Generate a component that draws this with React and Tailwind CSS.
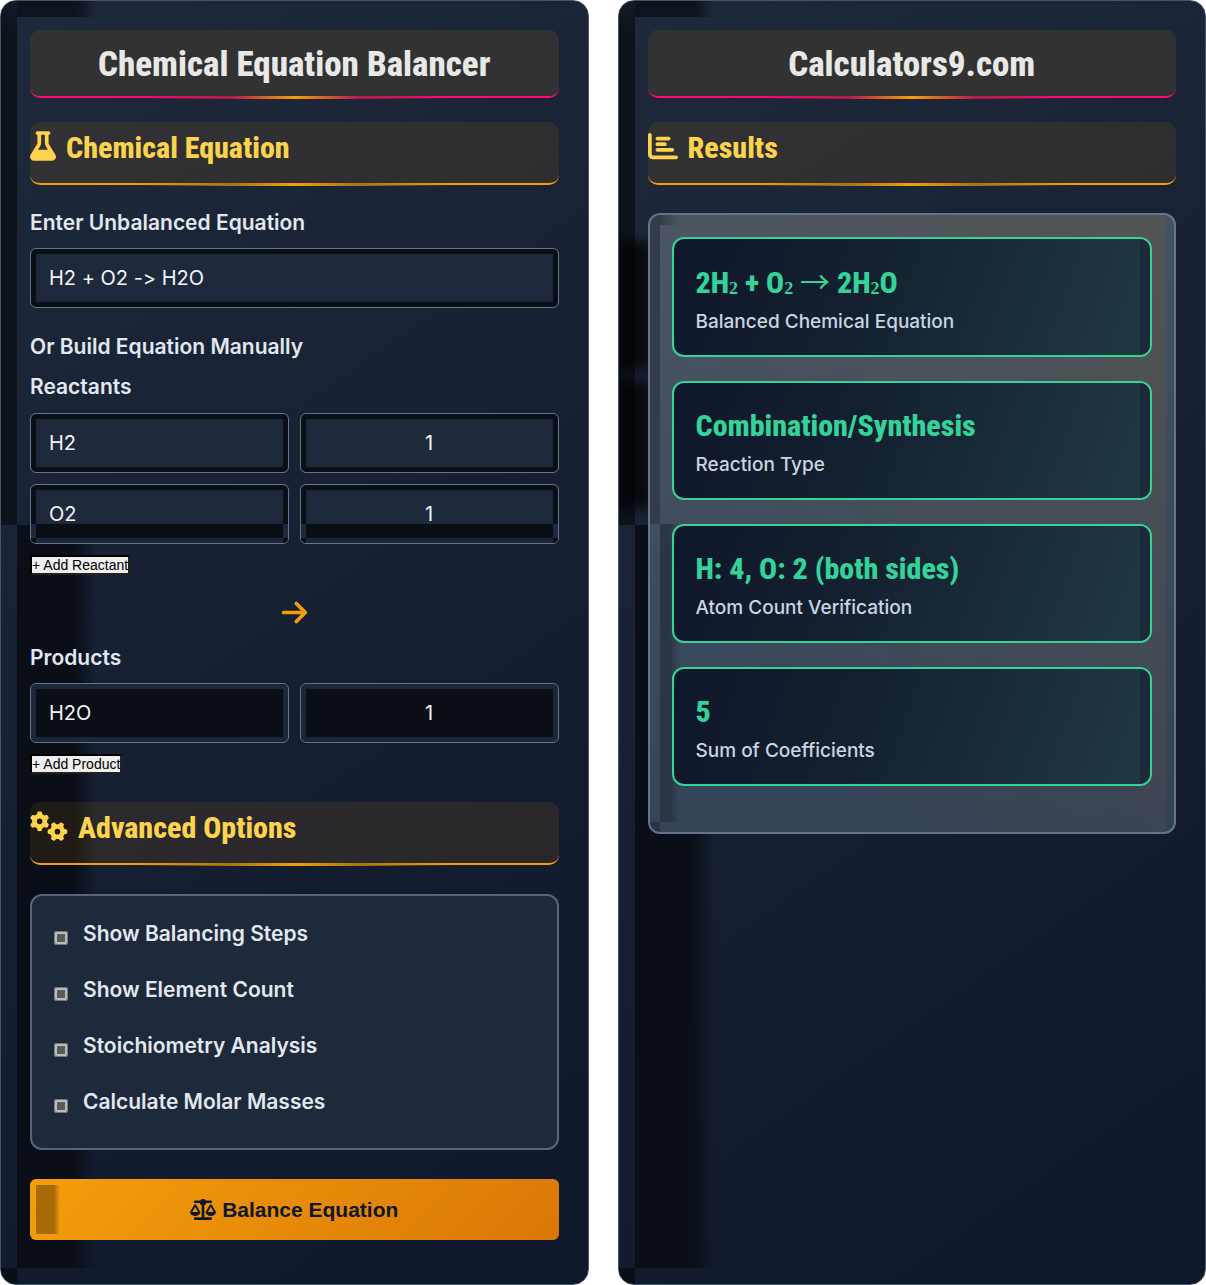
import React, { useState } from 'react';
import { FaFlask, FaChartBar, FaGears, FaScaleBalanced, FaArrowRight } from 'react-icons/fa6';

const OPTIONS = [
  'Show Balancing Steps',
  'Show Element Count',
  'Stoichiometry Analysis',
  'Calculate Molar Masses',
];

const RESULTS = [
  { value: '2H₂ + O₂ → 2H₂O', label: 'Balanced Chemical Equation' },
  { value: 'Combination/Synthesis', label: 'Reaction Type' },
  { value: 'H: 4, O: 2 (both sides)', label: 'Atom Count Verification' },
  { value: '5', label: 'Sum of Coefficients' },
];

const Panel = ({ children }) => (
  <section className="relative flex-1 min-w-0 overflow-hidden rounded-2xl border border-[#475569] bg-[linear-gradient(145deg,#1e293b,#0f172a)] px-[29px] pt-[29px] pb-[44px]">
    {/* Offset inner shadows along the left edge */}
    <div aria-hidden="true" className="pointer-events-none absolute inset-0 flex flex-col">
      <div className="flex h-[524px] shrink-0">
        <div className="w-4 bg-[linear-gradient(#131b28,#0d131b_30px)]" />
        <div className="h-4 w-20 bg-[linear-gradient(to_right,#0e141d_60px,transparent)]" />
      </div>
      <div className="ml-4 w-20 flex-1 bg-[linear-gradient(to_right,#0a0f17_58px,transparent)]" />
      <div className="h-4 w-4 shrink-0 bg-[#0a0e17]" />
    </div>
    <div className="relative">{children}</div>
  </section>
);

const Title = ({ children }) => (
  <h1 className="relative mb-6 rounded-[10px] border-b-2 border-[#ff0a78] bg-[#323232] pt-3.5 pb-2.5 text-center font-['Roboto_Condensed','Liberation_Sans_Narrow',sans-serif] text-[35px] leading-[42px] font-extrabold text-[#e8e8e6]">
    {children}
    <span className="absolute inset-x-[20%] -bottom-[3px] h-[3px] bg-[linear-gradient(to_right,transparent,#b31b4b_30%,#f59e0b_50%,#b31b4b_70%,transparent)]" />
  </h1>
);

const SectionTitle = ({ icon: Icon, iconClass, children }) => (
  <h2 className="relative flex items-center gap-2.5 rounded-[10px] border-b-2 border-[#f59e0b] bg-[#f08c00]/10 pt-2 pb-[17px] font-['Roboto_Condensed','Liberation_Sans_Narrow',sans-serif] text-[30px] leading-[36px] font-extrabold text-[#fcd34d]">
    <Icon className={`-mt-1 h-[30px] shrink-0 ${iconClass}`} />
    {children}
    <span className="absolute inset-x-[20%] -bottom-[3px] h-[3px] bg-[linear-gradient(to_right,transparent,#ab740f_30%,#f59e0b_50%,#ab740f_70%,transparent)]" />
  </h2>
);

const FIELD = "block h-[60px] w-full rounded-md border border-[#64748b] px-[18px] font-['Inter',sans-serif] text-[20px] font-normal text-[#f1f5f9] outline-none [font-feature-settings:'calt'_0]";

const Field = ({ tone = 'light', className = '', ...props }) => (
  <div className="relative flex-1 min-w-0">
    <input
      {...props}
      className={`${FIELD} ${className} ${
        tone === 'dark'
          ? 'bg-[#0a0f16] shadow-[inset_0_0_1px_5px_#1c2737]'
          : 'bg-[#1e293b] shadow-[inset_0_0_1px_5px_#0a0f16]'
      }`}
    />
    {tone === 'split' && (
      <div aria-hidden="true" className="pointer-events-none absolute inset-x-px top-10 bottom-px flex flex-col overflow-hidden rounded-b-[5px]">
        <div className="flex-1 border-x-[5px] border-[#1e293b] bg-[#0a0f16]" />
        <div className="h-[5px] border-x-[5px] border-[#0a0f16] bg-[#1b2636]" />
      </div>
    )}
  </div>
);

const CompoundRow = ({ name, tone, index }) => (
  <div className="mb-[11px] flex gap-[11px]">
    <Field tone={tone} defaultValue={name} aria-label={`Compound ${index}`} />
    <Field tone={tone} defaultValue="1" aria-label={`Coefficient ${index}`} className="text-center" />
  </div>
);

const AddButton = ({ children, onClick }) => (
  <button
    type="button"
    onClick={onClick}
    className="block rounded-xs border-2 border-t-black border-l-black border-r-[#222] border-b-[#222] bg-[#efefef] font-['Liberation_Sans',sans-serif] text-[14px] leading-4 font-normal text-black"
  >
    {children}
  </button>
);

// Subscripts sit on the baseline, the reaction arrow is a full em wide
const Formula = ({ text }) =>
  text.split(/([₂→])/).map((part, i) => {
    if (part === '₂') {
      return <span key={i} className="align-[5px] font-['Liberation_Serif',serif] leading-none font-bold">{part}</span>;
    }
    if (part === '→') {
      return <span key={i} className="font-['Noto_Sans_CJK_JP',sans-serif] leading-none font-normal">{part}</span>;
    }
    return part;
  });

const ResultCard = ({ value, label }) => (
  <div className="relative mb-6 overflow-hidden rounded-xl border-2 border-[#34d399] bg-[linear-gradient(110deg,#0f172a,#142030_40%,#203a42)] px-[22px] pt-6 pb-[19px]">
    <div aria-hidden="true" className="absolute inset-y-0 right-0 w-2.5 bg-[#1c2a39]" />
    <div className="mb-[5px] font-['Roboto_Condensed','Liberation_Sans_Narrow',sans-serif] text-[30px] leading-[38px] font-extrabold text-[#34d399]">
      <Formula text={value} />
    </div>
    <div className="font-['Inter',sans-serif] text-[19px] leading-[29px] font-medium text-[#cbd5e1]">{label}</div>
  </div>
);

export default function App() {
  const [reactants, setReactants] = useState(['H2', 'O2']);
  const [products, setProducts] = useState(['H2O']);

  return (
    <main className="flex gap-[29px] bg-white font-['Inter',sans-serif] text-[21px] leading-8 font-semibold text-[#e2e8f0]">
      <Panel>
        <Title>Chemical Equation Balancer</Title>
        <SectionTitle icon={FaFlask} iconClass="w-[26px]">Chemical Equation</SectionTitle>

        <label htmlFor="equation" className="mt-[22px] mb-[9px] block">Enter Unbalanced Equation</label>
        <Field id="equation" defaultValue="H2 + O2 -> H2O" />

        <div className="mt-[23px]">Or Build Equation Manually</div>
        <div className="mt-2 mb-2.5">Reactants</div>
        {reactants.map((name, i) => (
          <CompoundRow key={i} index={`reactant ${i + 1}`} name={name} tone={i === 1 ? 'split' : 'light'} />
        ))}
        <AddButton onClick={() => setReactants([...reactants, ''])}>+ Add Reactant</AddButton>

        <div className="mt-[25px] mb-[18px] flex h-6 items-center justify-center text-[29px] text-[#f59e0b]">
          <FaArrowRight />
        </div>

        <div className="mb-[9px]">Products</div>
        {products.map((name, i) => (
          <CompoundRow key={i} index={`product ${i + 1}`} name={name} tone="dark" />
        ))}
        <AddButton onClick={() => setProducts([...products, ''])}>+ Add Product</AddButton>

        <div className="mt-7">
          <SectionTitle icon={FaGears} iconClass="w-[38px]">Advanced Options</SectionTitle>
        </div>

        <div className="mt-[29px] flex flex-col gap-6 rounded-xl border-2 border-[#56657b] bg-[#1e293b] px-[22px] pt-[22px] pb-[30px]">
          {OPTIONS.map((option) => (
            <label key={option} className="flex items-center gap-[15px]">
              <input
                type="checkbox"
                className="mt-2 h-3.5 w-3.5 appearance-none rounded-[3px] border-3 border-[#bdbdbd] bg-[#5b5b5b] outline-1 -outline-offset-1 outline-[#777] checked:bg-[#f59e0b]"
              />
              {option}
            </label>
          ))}
        </div>

        <button
          type="button"
          className="relative mt-[29px] flex h-[61px] w-full items-center justify-center gap-1.5 overflow-hidden rounded-md bg-[linear-gradient(135deg,#f59e0b,#d97706)] font-['Liberation_Sans',sans-serif] text-[21px] font-bold text-[#0f172a]"
        >
          <span aria-hidden="true" className="absolute inset-y-1.5 left-1.5 w-6 bg-[linear-gradient(to_right,#a76b08_75%,transparent)]" />
          <FaScaleBalanced className="h-[21px] w-[26px]" />
          Balance Equation
        </button>
      </Panel>

      <Panel>
        <Title>Calculators9.com</Title>
        <SectionTitle icon={FaChartBar} iconClass="w-[30px]">Results</SectionTitle>

        <div className="relative mt-7">
          {/* Card shadows that spill out past the results box */}
          <div aria-hidden="true" className="absolute top-7 -left-8 h-32 w-9 bg-black/70 blur-[6px]" />
          <div aria-hidden="true" className="absolute top-42 -left-8 h-32 w-9 bg-black/70 blur-[6px]" />
          <div className="relative overflow-hidden rounded-xl border-2 border-[#64748b] bg-[linear-gradient(165deg,#475569,#334155)] px-[22px] py-[22px]">
            <div aria-hidden="true" className="absolute inset-y-0 right-2 left-0 bg-[linear-gradient(to_top_right,transparent_20%,#6b5a3a66)]" />
            <div aria-hidden="true" className="absolute inset-0 flex flex-col">
              <div className="flex h-[309px]">
                <div className="w-2.5 bg-[#343c49]" />
                <div className="h-2.5 w-5 bg-[linear-gradient(to_right,#343c49,transparent)]" />
              </div>
              <div className="ml-2.5 w-5 flex-1 bg-[linear-gradient(to_right,#2c3544_50%,transparent)]" />
              <div className="h-2.5 w-2.5 bg-[#2c3544]" />
            </div>
            <div className="relative">
              {RESULTS.map((result) => (
                <ResultCard key={result.label} {...result} />
              ))}
            </div>
          </div>
        </div>
      </Panel>
    </main>
  );
}
